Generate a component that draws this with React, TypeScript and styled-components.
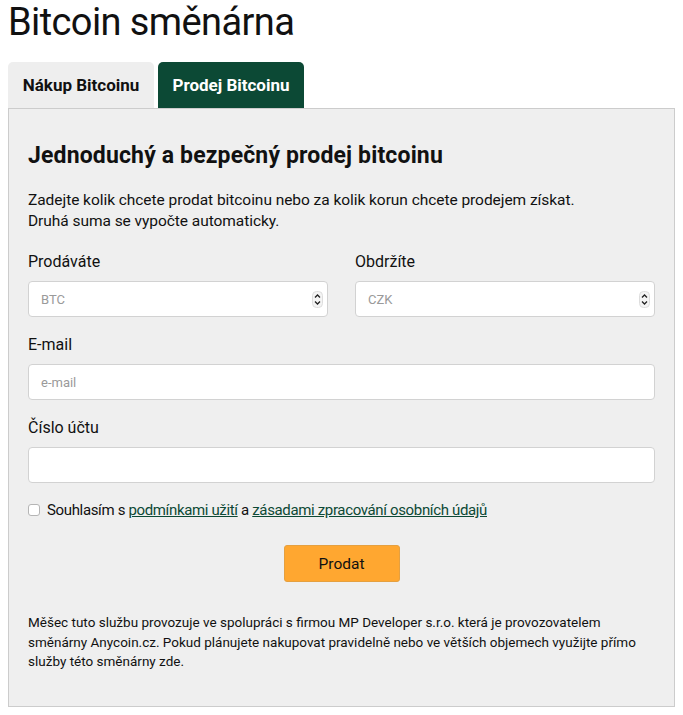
import styled, { createGlobalStyle } from 'styled-components';

const GlobalStyle = createGlobalStyle`
	body {
		margin: 0;
		padding: 0 8px;
		background: #ffffff;
		font-family: Roboto, 'Noto Sans', sans-serif;
		color: #111111;
	}
	* {
		box-sizing: border-box;
	}
`;

const Page = styled.div`
	width: 667px;
`;

const Title = styled.h1`
	font-size: 38px;
	font-weight: 400;
	line-height: 44px;
	margin: 0 0 18px;
	letter-spacing: -0.6px;
`;

const Tabs = styled.div`
	display: flex;
	gap: 4px;
`;

const Tab = styled.div<{ $active?: boolean }>`
	width: 146px;
	height: 46px;
	display: flex;
	align-items: center;
	justify-content: center;
	border-radius: 5px 5px 0 0;
	font-size: 17px;
	font-weight: 700;
	background: ${(p) => (p.$active ? '#0c4935' : '#eeeeee')};
	color: ${(p) => (p.$active ? '#ffffff' : '#111111')};
`;

const Panel = styled.div`
	background: #efefef;
	border: 1px solid #cccccc;
	padding: 20px 19px 34px;
`;

const Heading = styled.h2`
	font-size: 23px;
	font-weight: 700;
	line-height: 30px;
	margin: 12px 0 0;
	letter-spacing: 0.15px;
`;

const Intro = styled.p`
	font-size: 15.5px;
	line-height: 21px;
	margin: 19px 0 0;
	letter-spacing: -0.05px;
`;

const Row = styled.div`
	display: grid;
	grid-template-columns: 1fr 1fr;
	gap: 27px;
	& > div {
		margin-top: 20px;
	}
`;

const Field = styled.div`
	margin-top: 18px;
	display: flex;
	flex-direction: column;
`;

const Label = styled.label`
	font-size: 16px;
	line-height: 20px;
	margin-bottom: 9px;
`;

const InputBox = styled.div`
	height: 36px;
	display: flex;
	align-items: center;
	background: #ffffff;
	border: 1px solid #d2d2d2;
	border-radius: 4px;
	padding: 0 4px 0 10px;
`;

const Input = styled.input`
	flex: 1;
	min-width: 0;
	border: none;
	outline: none;
	background: transparent;
	font-family: inherit;
	font-size: 13px;
	color: #111111;
	&::placeholder {
		color: #9a9a9a;
	}
`;

const Spinner = () => (
	<svg width='11' height='17' viewBox='0 0 11 17'>
		<rect x='0.5' y='0.5' width='10' height='16' rx='4' fill='#f4f4f4' stroke='#dddddd' />
		<path d='M3 6.5 L5.5 4 L8 6.5' fill='none' stroke='#222' strokeWidth='1.3' />
		<path d='M3 10.5 L5.5 13 L8 10.5' fill='none' stroke='#222' strokeWidth='1.3' />
	</svg>
);

const Consent = styled.label`
	margin-top: 17px;
	display: flex;
	align-items: center;
	gap: 7px;
	font-size: 15px;
	line-height: 20px;
	letter-spacing: -0.35px;
`;

const Checkbox = styled.input`
	appearance: none;
	width: 12px;
	height: 12px;
	margin: 0;
	border: 1px solid #b5b5b5;
	border-radius: 3px;
	background: #ffffff;
`;

const Link = styled.a`
	color: #0c4935;
	text-decoration: underline;
`;

const Actions = styled.div`
	display: flex;
	justify-content: center;
	margin-top: 25px;
`;

const Button = styled.button`
	width: 116px;
	height: 37px;
	border: 1px solid #e5a040;
	border-radius: 3px;
	background: #ffa730;
	font-family: inherit;
	font-size: 15.5px;
	color: #111111;
`;

const Note = styled.p`
	font-size: 13.5px;
	line-height: 19.5px;
	margin: 31px 0 0;
`;

export default function App() {
	return (
		<>
			<GlobalStyle />
			<Page>
				<Title>Bitcoin směnárna</Title>
				<Tabs>
					<Tab>Nákup Bitcoinu</Tab>
					<Tab $active>Prodej Bitcoinu</Tab>
				</Tabs>
				<Panel>
					<Heading>Jednoduchý a bezpečný prodej bitcoinu</Heading>
					<Intro>
						Zadejte kolik chcete prodat bitcoinu nebo za kolik korun chcete prodejem získat.
						<br />
						Druhá suma se vypočte automaticky.
					</Intro>
					<Row>
						<Field>
							<Label>Prodáváte</Label>
							<InputBox>
								<Input placeholder='BTC' />
								<Spinner />
							</InputBox>
						</Field>
						<Field>
							<Label>Obdržíte</Label>
							<InputBox>
								<Input placeholder='CZK' />
								<Spinner />
							</InputBox>
						</Field>
					</Row>
					<Field>
						<Label>E-mail</Label>
						<InputBox>
							<Input placeholder='e-mail' />
						</InputBox>
					</Field>
					<Field>
						<Label>Číslo účtu</Label>
						<InputBox>
							<Input />
						</InputBox>
					</Field>
					<Consent>
						<Checkbox type='checkbox' />
						<span>
							Souhlasím s <Link href='#'>podmínkami užití</Link> a{' '}
							<Link href='#'>zásadami zpracování osobních údajů</Link>
						</span>
					</Consent>
					<Actions>
						<Button>Prodat</Button>
					</Actions>
					<Note>
						Měšec tuto službu provozuje ve spolupráci s firmou MP Developer s.r.o. která je
						provozovatelem směnárny Anycoin.cz. Pokud plánujete nakupovat pravidelně nebo ve
						větších objemech využijte přímo služby této směnárny zde.
					</Note>
				</Panel>
			</Page>
		</>
	);
}
